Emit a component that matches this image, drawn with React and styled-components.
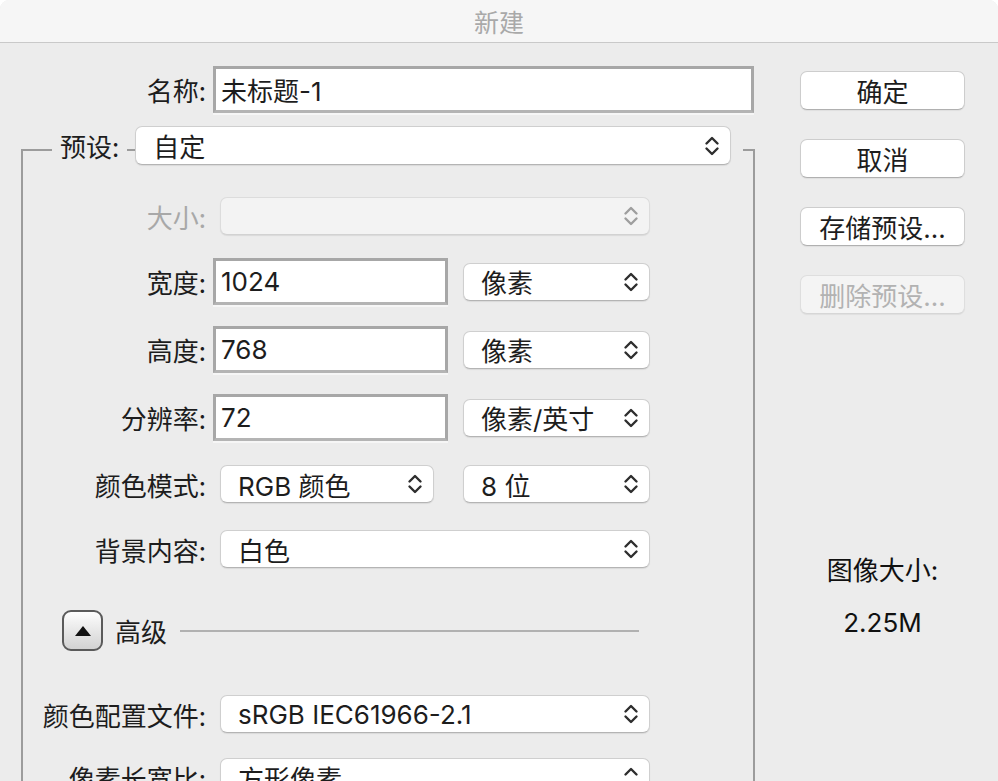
import React from 'react';
import styled, { createGlobalStyle } from 'styled-components';

const GlobalStyle = createGlobalStyle`
  html, body {
    margin: 0;
    padding: 0;
    background: #ffffff;
  }
  body {
    font-family: Inter, "Noto Sans CJK SC", sans-serif;
    color: #1d1d1d;
  }
`;

const Window = styled.div`
  width: 998px;
  height: 781px;
  overflow: hidden;
  background: #ececec;
  border-radius: 9px 9px 0 0;
  display: flex;
  flex-direction: column;
`;

const TitleBar = styled.div`
  height: 42px;
  flex: none;
  background: #f6f6f6;
  border-bottom: 1px solid #c9c9c9;
  display: flex;
  align-items: center;
  justify-content: center;
  font-family: "Noto Sans CJK SC", sans-serif;
  font-size: 25px;
  color: #a9a9a9;
`;

const Body = styled.div`
  display: flex;
  align-items: flex-start;
`;

const FormColumn = styled.div`
  width: 800px;
  flex: none;
  padding-top: 23px;
`;

const SideColumn = styled.div`
  width: 165px;
  padding-top: 28px;
  display: flex;
  flex-direction: column;
  align-items: center;
  gap: 29px;
`;

const Row = styled.div`
  display: flex;
  align-items: center;
  height: ${p => p.$h || 47}px;
  margin-top: ${p => p.$top || 0}px;
`;

const Label = styled.div`
  width: ${p => p.$w || 185}px;
  flex: none;
  text-align: right;
  font-size: 26px;
  font-family: "Noto Sans CJK SC", sans-serif;
  color: ${p => (p.$disabled ? '#a8a8a8' : '#1d1d1d')};
  margin-right: 7px;
  white-space: nowrap;
`;

const TextField = styled.div`
  box-sizing: border-box;
  width: ${p => p.$w}px;
  height: 47px;
  background: #ffffff;
  border: 3px solid #a7a7a7;
  border-bottom-color: #b4b4b4;
  display: flex;
  align-items: center;
  padding-left: 5px;
  font-size: 26px;
  color: #1d1d1d;
  box-shadow: 0 2px 0 #f6f6f6;
`;

const Popup = styled.div`
  box-sizing: border-box;
  width: ${p => p.$w}px;
  height: ${p => p.$h || 38}px;
  margin-left: ${p => p.$ml ?? 7}px;
  background: ${p => (p.$disabled ? '#f3f3f3' : '#ffffff')};
  border: 1px solid ${p => (p.$disabled ? '#dcdcdc' : '#cfcfcf')};
  border-bottom-color: ${p => (p.$disabled ? '#d2d2d2' : '#b4b4b4')};
  border-radius: 7px;
  box-shadow: 0 1px 1px rgba(0, 0, 0, 0.08);
  display: flex;
  align-items: center;
  padding: 0 10px 0 17px;
  font-size: 26px;
  color: #1d1d1d;
  flex: none;
`;

const PopupText = styled.span`
  flex: 1;
  white-space: nowrap;
`;

const Group = styled.div`
  position: relative;
  margin-left: 21px;
  width: 734px;
  margin-top: 13px;
  &::before {
    content: '';
    position: absolute;
    top: 23px;
    left: 0;
    right: 0;
    bottom: -200px;
    border: 2px solid #9c9c9c;
    border-bottom: none;
  }
`;

const GroupContent = styled.div`
  position: relative;
`;

const HeaderRow = styled.div`
  display: flex;
  align-items: center;
  height: 39px;
  padding-left: 31px;
`;

const HeaderLabel = styled.div`
  background: #ececec;
  padding: 0 8px;
  margin-right: 8px;
  font-size: 26px;
  font-family: "Noto Sans CJK SC", sans-serif;
`;

const HeaderSlot = styled.div`
  background: #ececec;
  padding-right: 12px;
  display: flex;
`;

const Button = styled.div`
  box-sizing: border-box;
  width: 165px;
  height: 39px;
  background: ${p => (p.$disabled ? '#f4f4f4' : '#ffffff')};
  border: 1px solid ${p => (p.$disabled ? '#dedede' : '#cdcdcd')};
  border-bottom-color: ${p => (p.$disabled ? '#d6d6d6' : '#b0b0b0')};
  border-radius: 7px;
  box-shadow: 0 1px 1px rgba(0, 0, 0, 0.06);
  display: flex;
  align-items: center;
  justify-content: center;
  font-size: 26px;
  color: ${p => (p.$disabled ? '#b2b2b2' : '#1d1d1d')};
`;

const SizeBlock = styled.div`
  margin-top: 210px;
  display: flex;
  flex-direction: column;
  align-items: center;
  gap: 16px;
  font-size: 26px;
  line-height: 36px;
  color: #111;
`;

const AdvancedRow = styled.div`
  display: flex;
  align-items: center;
  height: 41px;
  margin-top: ${p => p.$top}px;
  padding-left: 41px;
`;

const DisclosureButton = styled.div`
  box-sizing: border-box;
  width: 41px;
  height: 41px;
  border: 2px solid #5a5a5a;
  border-radius: 9px;
  background: linear-gradient(#fdfdfd, #d2d2d2);
  display: flex;
  align-items: center;
  justify-content: center;
  flex: none;
`;

const AdvancedText = styled.div`
  margin-left: 12px;
  font-size: 26px;
  font-family: "Noto Sans CJK SC", sans-serif;
`;

const Rule = styled.div`
  margin-left: 13px;
  width: 459px;
  height: 2px;
  background: #b1b1b1;
`;

function Chevrons({ disabled, upOnly }) {
  const c = disabled ? '#9e9e9e' : '#2e2e2e';
  return (
    <svg width="16" height="24" viewBox="0 0 16 24" fill="none">
      <path d="M2.5 9.5 L8 4 L13.5 9.5" stroke={c} strokeWidth="2.4" strokeLinecap="round" strokeLinejoin="round" />
      {!upOnly && (
        <path d="M2.5 14.5 L8 20 L13.5 14.5" stroke={c} strokeWidth="2.4" strokeLinecap="round" strokeLinejoin="round" />
      )}
    </svg>
  );
}

function Select({ w, children, disabled, ml, h, upOnly }) {
  return (
    <Popup $w={w} $disabled={disabled} $ml={ml} $h={h}>
      <PopupText>{children}</PopupText>
      <Chevrons disabled={disabled} upOnly={upOnly} />
    </Popup>
  );
}

function App() {
  return (
    <Window>
      <GlobalStyle />
      <TitleBar>新建</TitleBar>
      <Body>
        <FormColumn>
          <Row>
            <Label $w={206}>名称:</Label>
            <TextField $w={541}>未标题-1</TextField>
          </Row>

          <Group>
            <GroupContent>
              <HeaderRow>
                <HeaderLabel>预设:</HeaderLabel>
                <HeaderSlot>
                  <Select w={596} h={39} ml={0}>自定</Select>
                </HeaderSlot>
              </HeaderRow>

              <Row $h={38} $top={32}>
                <Label $disabled>大小:</Label>
                <Select w={430} disabled />
              </Row>

              <Row $top={23}>
                <Label>宽度:</Label>
                <TextField $w={235}>1024</TextField>
                <Select w={187} ml={15}>像素</Select>
              </Row>

              <Row $top={21}>
                <Label>高度:</Label>
                <TextField $w={235}>768</TextField>
                <Select w={187} ml={15}>像素</Select>
              </Row>

              <Row $top={21}>
                <Label>分辨率:</Label>
                <TextField $w={235}>72</TextField>
                <Select w={187} ml={15}>像素/英寸</Select>
              </Row>

              <Row $h={38} $top={24}>
                <Label>颜色模式:</Label>
                <Select w={214}>RGB 颜色</Select>
                <Select w={187} ml={29}>8 位</Select>
              </Row>

              <Row $h={38} $top={27}>
                <Label>背景内容:</Label>
                <Select w={430}>白色</Select>
              </Row>

              <AdvancedRow $top={42}>
                <DisclosureButton>
                  <svg width="18" height="12" viewBox="0 0 18 12">
                    <path d="M9 1 L17 11 L1 11 Z" fill="#111" />
                  </svg>
                </DisclosureButton>
                <AdvancedText>高级</AdvancedText>
                <Rule />
              </AdvancedRow>

              <Row $h={38} $top={44}>
                <Label>颜色配置文件:</Label>
                <Select w={430}>sRGB IEC61966-2.1</Select>
              </Row>

              <Row $h={38} $top={25}>
                <Label>像素长宽比:</Label>
                <Select w={430} upOnly>方形像素</Select>
              </Row>
            </GroupContent>
          </Group>
        </FormColumn>

        <SideColumn>
          <Button>确定</Button>
          <Button>取消</Button>
          <Button>存储预设...</Button>
          <Button $disabled>删除预设...</Button>
          <SizeBlock>
            <div>图像大小:</div>
            <div>2.25M</div>
          </SizeBlock>
        </SideColumn>
      </Body>
    </Window>
  );
}

export default App;
